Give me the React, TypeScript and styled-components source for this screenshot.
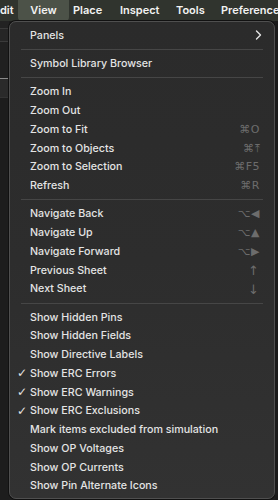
import React from "react";
import styled, { createGlobalStyle } from "styled-components";

const Global = createGlobalStyle`
  html, body { margin: 0; padding: 0; background: #1c1c1c; }
  body { width: 278px; height: 500px; overflow: hidden; font-family: Inter, "Noto Sans", sans-serif; }
`;

const Screen = styled.div`
  width: 278px;
  height: 500px;
  display: flex;
  flex-direction: column;
  background: #1e1e1e;
`;

const MenuBar = styled.div`
  height: 21px;
  flex: none;
  display: flex;
  align-items: stretch;
  background: #30342e;
  color: #f2f2f2;
  font-size: 11px;
  font-weight: 600;
  white-space: nowrap;
  overflow: hidden;
`;

const BarItem = styled.div<{ $active?: boolean; $w?: number; $pad?: number }>`
  flex: ${(p) => (p.$w ? "none" : "1")};
  width: ${(p) => (p.$w ? `${p.$w}px` : "auto")};
  display: flex;
  align-items: center;
  justify-content: ${(p) => (p.$active ? "center" : "flex-start")};
  padding: 0 0 2px ${(p) => p.$pad ?? 0}px;
  box-sizing: border-box;
  background: ${(p) => (p.$active ? "#4c5248" : "transparent")};
  border-radius: 0 0 4px 4px;
  overflow: hidden;
`;

const Body = styled.div`
  flex: 1;
  display: flex;
  min-height: 0;
`;

const LeftStrip = styled.div`
  width: 9px;
  flex: none;
  display: flex;
  flex-direction: column;
  background: #1d1d1d;
`;

const StripBand = styled.div<{ $h: number; $bg: string; $line?: string }>`
  height: ${(p) => p.$h}px;
  flex: none;
  background: ${(p) => p.$bg};
  border-bottom: 1px solid ${(p) => p.$line || "transparent"};
`;

const Menu = styled.div`
  width: 266px;
  flex: none;
  box-sizing: border-box;
  margin-bottom: 1px;
  padding: 4px 0 3px;
  border: 1px solid #4f4f4f;
  border-radius: 7px;
  background: linear-gradient(180deg, #2b2b2b 0%, #2d2d2d 50%, #323232 100%);
  box-shadow: 0 0 0 1px #111;
  color: #e4e4e4;
  font-size: 10.7px;
  font-weight: 500;
  display: flex;
  flex-direction: column;
`;

const RightStrip = styled.div`
  flex: 1;
  background: #1a1a1a;
`;

const Row = styled.div`
  height: 18.75px;
  flex: none;
  display: flex;
  align-items: center;
  padding: 0 14px 0 7px;
`;

const Check = styled.span`
  width: 13px;
  flex: none;
  font-size: 12px;
  color: #e4e4e4;
  font-family: "DejaVu Sans", sans-serif;
`;

const Label = styled.span`
  flex: 1;
  white-space: nowrap;
`;

const Shortcut = styled.span`
  color: #6c6c6c;
  font-size: 11px;
  font-family: "DejaVu Sans", Inter, sans-serif;
  white-space: nowrap;
  letter-spacing: 0.5px;
`;

const Arrow = styled.span`
  color: #6c6c6c;
  font-size: 13px;
  font-family: "Noto Sans", "DejaVu Sans", sans-serif;
  margin-right: 1px;
`;

const Chevron = styled.svg`
  width: 7px;
  height: 10px;
  margin-right: -2px;
`;

const Separator = styled.div`
  height: 1px;
  flex: none;
  margin: 4.25px 11px 4.25px 11px;
  background: #464646;
`;

type Item = { label: string; check?: boolean; sc?: string; arrow?: string; sub?: boolean } | "sep";

const items: Item[] = [
  { label: "Panels", sub: true },
  "sep",
  { label: "Symbol Library Browser" },
  "sep",
  { label: "Zoom In" },
  { label: "Zoom Out" },
  { label: "Zoom to Fit", sc: "⌘O" },
  { label: "Zoom to Objects", sc: "⌘⤒" },
  { label: "Zoom to Selection", sc: "⌘F5" },
  { label: "Refresh", sc: "⌘R" },
  "sep",
  { label: "Navigate Back", sc: "⌥◀" },
  { label: "Navigate Up", sc: "⌥▲" },
  { label: "Navigate Forward", sc: "⌥▶" },
  { label: "Previous Sheet", arrow: "↑" },
  { label: "Next Sheet", arrow: "↓" },
  "sep",
  { label: "Show Hidden Pins" },
  { label: "Show Hidden Fields" },
  { label: "Show Directive Labels" },
  { label: "Show ERC Errors", check: true },
  { label: "Show ERC Warnings", check: true },
  { label: "Show ERC Exclusions", check: true },
  { label: "Mark items excluded from simulation" },
  { label: "Show OP Voltages" },
  { label: "Show OP Currents" },
  { label: "Show Pin Alternate Icons" },
];

const bar: { t: string; w?: number; pad?: number; active?: boolean }[] = [
  { t: "dit", w: 18, pad: 0 },
  { t: "View", w: 51, active: true },
  { t: "Place", w: 47, pad: 4 },
  { t: "Inspect", w: 56, pad: 4 },
  { t: "Tools", w: 45, pad: 4 },
  { t: "Preferences", pad: 4 },
];

export default function App() {
  return (
    <>
      <Global />
      <Screen>
        <MenuBar>
          {bar.map((b) => (
            <BarItem key={b.t} $w={b.w} $pad={b.pad} $active={b.active}>
              {b.t}
            </BarItem>
          ))}
        </MenuBar>
        <Body>
          <LeftStrip>
            <StripBand $h={7} $bg="#222" $line="#3a3a3a" />
            <StripBand $h={12} $bg="#262626" $line="#3a3a3a" />
            <StripBand $h={36} $bg="#202020" $line="#8a8a8a" />
            <StripBand $h={18} $bg="#2a2a2a" $line="#333" />
            <StripBand $h={400} $bg="#1d1d1d" />
          </LeftStrip>
          <Menu>
            {items.map((it, i) =>
              it === "sep" ? (
                <Separator key={i} />
              ) : (
                <Row key={i}>
                  <Check>{it.check ? "✓" : ""}</Check>
                  <Label>{it.label}</Label>
                  {it.sc && <Shortcut>{it.sc}</Shortcut>}
                  {it.arrow && <Arrow>{it.arrow}</Arrow>}
                  {it.sub && (
                    <Chevron viewBox="0 0 7 10">
                      <path d="M1.5 1 L5.5 5 L1.5 9" fill="none" stroke="#e4e4e4" strokeWidth="1.4" strokeLinecap="round" strokeLinejoin="round" />
                    </Chevron>
                  )}
                </Row>
              )
            )}
          </Menu>
          <RightStrip />
        </Body>
      </Screen>
    </>
  );
}
